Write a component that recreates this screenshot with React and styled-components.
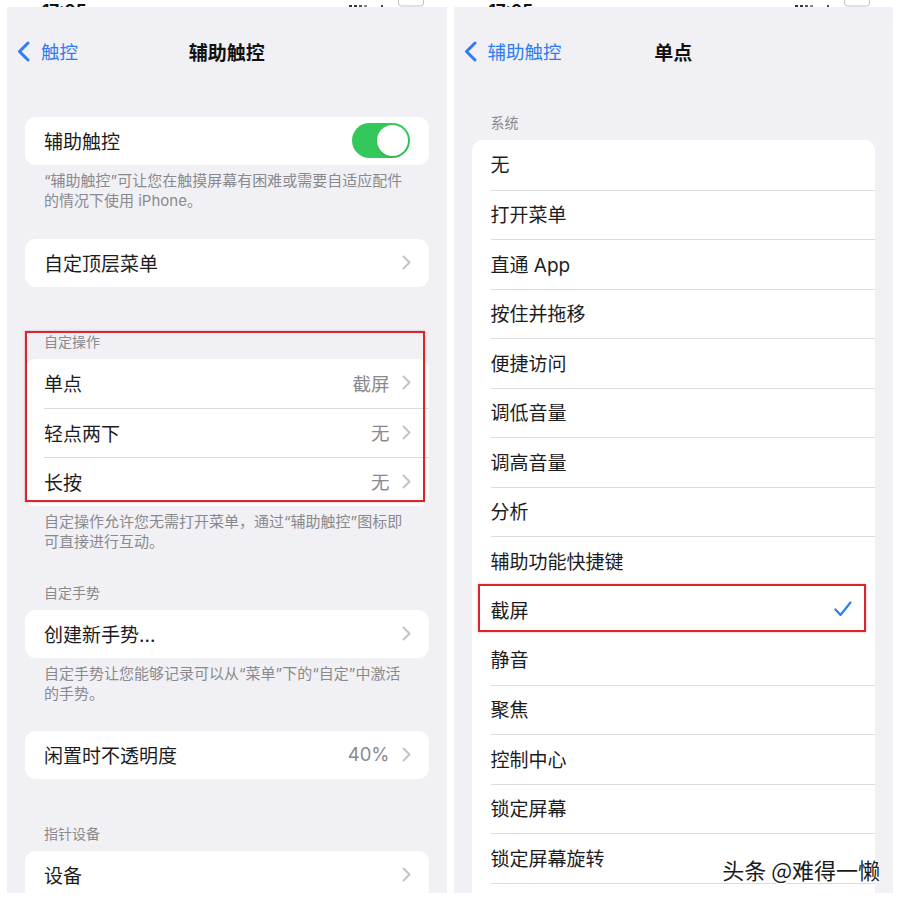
import React from 'react';
import styled, { createGlobalStyle } from 'styled-components';

const GlobalStyle = createGlobalStyle`
  html, body {
    margin: 0;
    padding: 0;
    background: #fff;
  }
  body {
    font-family: "Inter", "Noto Sans CJK SC", "Noto Sans", sans-serif;
    color: #1c1c1e;
  }
  * { box-sizing: border-box; }
`;

const Page = styled.div`
  width: 900px;
  height: 900px;
  display: grid;
  grid-template-columns: 1fr 1fr;
  column-gap: 7px;
  padding: 0 7px 7px;
`;

const Screen = styled.div`
  display: flex;
  flex-direction: column;
  min-width: 0;
  min-height: 0;
`;

// the status bar is cut off, only the top edge of its glyphs peeks out
const StatusCrop = styled.div`
  height: 7px;
  flex-shrink: 0;
  overflow: hidden;
  display: flex;
  align-items: flex-start;
  padding-left: 35px;
  padding-right: 23px;
`;

const Clock = styled.span`
  font: 700 17px/17px "Inter", "Liberation Sans", sans-serif;
  color: #111;
  margin-top: 3px;
`;

const StatusIcons = styled.svg`
  margin-left: auto;
  flex-shrink: 0;
`;

const Panel = styled.div`
  flex: 1;
  min-height: 0;
  position: relative;
  overflow: hidden;
  background: #f0f0f5;
`;

const NavBar = styled.div`
  height: 90px;
  padding-bottom: 2px;
  display: grid;
  grid-template-columns: 1fr auto 1fr;
  align-items: center;
`;

const Back = styled.div`
  display: flex;
  align-items: center;
  gap: 11px;
  padding-left: 10px;
  color: #2d7cf4;
  font-size: 18.5px;
  white-space: nowrap;
`;

const Title = styled.div`
  font-size: 19px;
  font-weight: 600;
  color: #111;
`;

const Content = styled.div`
  padding: 0 18px;
`;

const Header = styled.div`
  font-size: 14px;
  line-height: 20px;
  color: #8a8a8e;
  padding-left: 19px;
  margin: ${p => p.$top ?? 45}px 0 7px;
`;

const Footer = styled.div`
  font-size: 15px;
  line-height: 20px;
  color: #8a8a8e;
  padding: 0 19px;
  margin-top: 6px;
  white-space: pre;
`;

const Card = styled.div`
  background: #fff;
  border-radius: 11px;
  margin-top: ${p => p.$top ?? 0}px;
  --row-h: ${p => p.$rowH ?? 48}px;
`;

const Marked = styled.div`
  position: relative;
  &::after {
    content: "";
    position: absolute;
    left: 0;
    right: 4px;
    top: -1px;
    bottom: 4px;
    border: 2.5px solid #d8262c;
    box-shadow: 0 0 2px rgba(160, 0, 0, 0.35);
    pointer-events: none;
  }
`;

const RowInner = styled.div`
  flex: 1;
  height: var(--row-h);
  display: flex;
  align-items: center;
  padding-right: 18px;
  padding-bottom: 2px;
  min-width: 0;
`;

const Row = styled.div`
  display: flex;
  padding-left: 19px;
  position: relative;

  & + & > ${RowInner} {
    border-top: 1px solid #dcdcdf;
  }

  ${p => p.$marked && `
    &::after {
      content: "";
      position: absolute;
      left: 6px;
      right: 9px;
      top: -1.5px;
      bottom: 3px;
      border: 2.5px solid #d8262c;
      box-shadow: 0 0 2px rgba(160, 0, 0, 0.35);
      pointer-events: none;
    }
  `}
`;

const Label = styled.span`
  font-size: 19px;
  color: #1c1c1e;
  white-space: nowrap;
`;

const Value = styled.span`
  margin-left: auto;
  margin-right: 12px;
  font-size: 18.5px;
  color: #8a8a8e;
`;

const Switch = styled.div`
  margin-left: auto;
  margin-right: 1px;
  width: 58px;
  height: 35px;
  border-radius: 18px;
  background: #34c759;
  padding: 2px;
  display: flex;
  justify-content: flex-end;
  &::after {
    content: "";
    width: 31px;
    height: 31px;
    border-radius: 50%;
    background: #fff;
    box-shadow: 0 1px 2px rgba(0, 0, 0, 0.15);
  }
`;

const Tick = styled.svg`
  margin-left: auto;
  margin-right: 5px;
`;

const Watermark = styled.div`
  position: absolute;
  right: 13px;
  bottom: 12px;
  font-family: "Noto Sans CJK SC", sans-serif;
  font-size: 22px;
  line-height: 24px;
  color: #1b1b1b;
  white-space: nowrap;
  text-shadow: -1px -1px 0 #fff, 1px -1px 0 #fff, -1px 1px 0 #fff, 1px 1px 0 #fff;
`;

function Chevron() {
  return (
    <svg width="9" height="15" viewBox="0 0 9 15" style={{ flexShrink: 0 }}>
      <path d="M1.5 1.5 L7.5 7.5 L1.5 13.5" fill="none" stroke="#c4c4c7" strokeWidth="2" strokeLinecap="round" strokeLinejoin="round" />
    </svg>
  );
}

function BackChevron() {
  return (
    <svg width="13" height="21" viewBox="0 0 13 21">
      <path d="M11 2 L2.5 10.5 L11 19" fill="none" stroke="#2d7cf4" strokeWidth="3" strokeLinecap="round" strokeLinejoin="round" />
    </svg>
  );
}

function Status() {
  return (
    <StatusCrop>
      <Clock>17:05</Clock>
      <StatusIcons width="76" height="7" viewBox="0 0 76 7">
        <rect x="1" y="5" width="3" height="2" fill="#333" />
        <rect x="6" y="5" width="3" height="2" fill="#333" />
        <rect x="11" y="5" width="3" height="2" fill="#555" />
        <rect x="16" y="5" width="3" height="2" fill="#888" />
        <rect x="33" y="5" width="2" height="2" fill="#444" />
        <rect x="50.5" y="-5" width="25" height="11" rx="3" fill="none" stroke="#c2c2c2" strokeWidth="1" />
      </StatusIcons>
    </StatusCrop>
  );
}

function NavRow({ label, value, toggle }) {
  return (
    <Row>
      <RowInner>
        <Label>{label}</Label>
        {toggle ? <Switch /> : (
          <>
            <Value>{value}</Value>
            <Chevron />
          </>
        )}
      </RowInner>
    </Row>
  );
}

const actions = [
  '无', '打开菜单', '直通 App', '按住并拖移', '便捷访问', '调低音量', '调高音量',
  '分析', '辅助功能快捷键', '截屏', '静音', '聚焦', '控制中心', '锁定屏幕', '锁定屏幕旋转', '摇动',
];

function TouchSettings() {
  return (
    <Screen>
      <Status />
      <Panel>
        <NavBar>
          <Back><BackChevron />触控</Back>
          <Title>辅助触控</Title>
          <div />
        </NavBar>
        <Content>
          <Card $top={20}>
            <NavRow label="辅助触控" toggle />
          </Card>
          <Footer>{'“辅助触控”可让您在触摸屏幕有困难或需要自适应配件\n的情况下使用 iPhone。'}</Footer>

          <Card $top={28}>
            <NavRow label="自定顶层菜单" />
          </Card>

          <Marked>
            <Header>自定操作</Header>
            <Card $rowH={49}>
              <NavRow label="单点" value="截屏" />
              <NavRow label="轻点两下" value="无" />
              <NavRow label="长按" value="无" />
            </Card>
          </Marked>
          <Footer>{'自定操作允许您无需打开菜单，通过“辅助触控”图标即\n可直接进行互动。'}</Footer>

          <Header $top={31}>自定手势</Header>
          <Card>
            <NavRow label="创建新手势..." />
          </Card>
          <Footer>{'自定手势让您能够记录可以从“菜单”下的“自定”中激活\n的手势。'}</Footer>

          <Card $top={27}>
            <NavRow label="闲置时不透明度" value="40%" />
          </Card>

          <Header>指针设备</Header>
          <Card $rowH={49}>
            <NavRow label="设备" />
          </Card>
        </Content>
      </Panel>
    </Screen>
  );
}

function SingleTap() {
  return (
    <Screen>
      <Status />
      <Panel>
        <NavBar>
          <Back><BackChevron />辅助触控</Back>
          <Title>单点</Title>
          <div />
        </NavBar>
        <Content>
          <Header $top={16}>系统</Header>
          <Card $rowH={49.5}>
            {actions.map(name => (
              <Row key={name} $marked={name === '截屏'}>
                <RowInner>
                  <Label>{name}</Label>
                  {name === '截屏' && (
                    <Tick width="18" height="16" viewBox="0 0 18 16">
                      <path d="M1.5 8.5 L6.5 14 L16.5 1.5" fill="none" stroke="#2d7cf4" strokeWidth="2.2" strokeLinecap="round" strokeLinejoin="round" />
                    </Tick>
                  )}
                </RowInner>
              </Row>
            ))}
          </Card>
        </Content>
        <Watermark>头条 @难得一懒</Watermark>
      </Panel>
    </Screen>
  );
}

export default function App() {
  return (
    <>
      <GlobalStyle />
      <Page>
        <TouchSettings />
        <SingleTap />
      </Page>
    </>
  );
}
